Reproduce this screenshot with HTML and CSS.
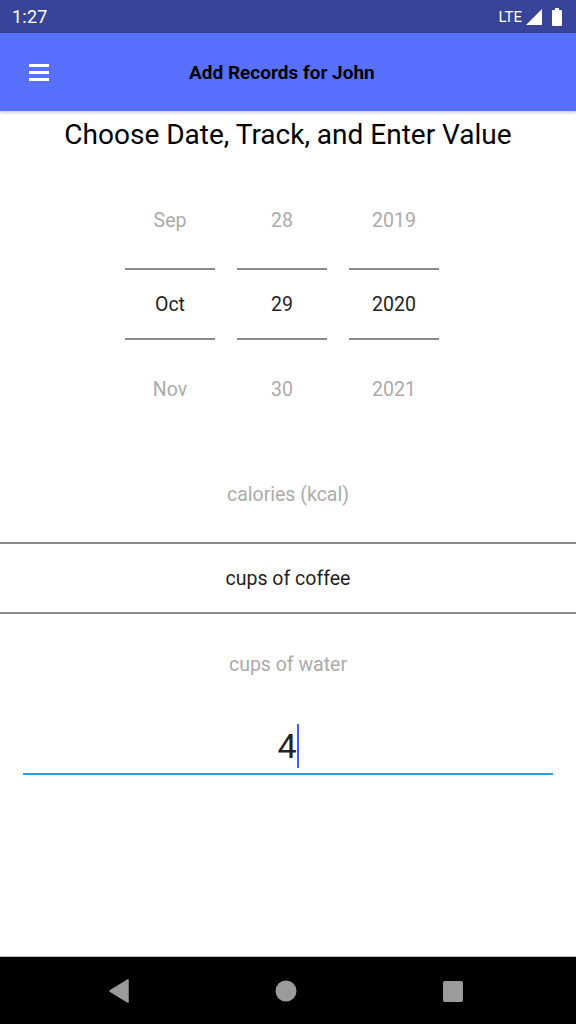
FILE: index.html
```html
<!DOCTYPE html>
<html>
<head>
<meta charset="utf-8">
<link rel="stylesheet" href="styles.css">
</head>
<body>
<div class="screen">
  <div class="statusbar">
    <span class="time">1:27</span>
    <div class="status-icons">
      <span class="lte">LTE</span>
      <svg class="signal" width="16" height="16" viewBox="0 0 16 16"><path d="M16 0 L16 16 L0 16 Z" fill="#fff"/></svg>
      <svg class="battery" width="10" height="18" viewBox="0 0 10 18"><rect x="3" y="0" width="4" height="2" fill="#fff"/><rect x="0" y="2" width="10" height="16" rx="1" fill="#fff"/></svg>
    </div>
  </div>
  <div class="appbar">
    <svg class="menu" width="20" height="17" viewBox="0 0 20 17"><rect x="0" y="0" width="20" height="3" fill="#fff"/><rect x="0" y="7" width="20" height="3" fill="#fff"/><rect x="0" y="14" width="20" height="3" fill="#fff"/></svg>
    <div class="appbar-title">Add Records for John</div>
  </div>
  <main class="content">
    <h1 class="heading">Choose Date, Track, and Enter Value</h1>
    <div class="date-picker">
      <div class="col">
        <div class="cell faded top">Sep</div>
        <div class="cell sel">Oct</div>
        <div class="cell faded bottom">Nov</div>
      </div>
      <div class="col">
        <div class="cell faded top">28</div>
        <div class="cell sel">29</div>
        <div class="cell faded bottom">30</div>
      </div>
      <div class="col">
        <div class="cell faded top">2019</div>
        <div class="cell sel">2020</div>
        <div class="cell faded bottom">2021</div>
      </div>
    </div>
    <div class="track-picker">
      <div class="cell faded top">calories (kcal)</div>
      <div class="cell sel">cups of coffee</div>
      <div class="cell faded bottom">cups of water</div>
    </div>
    <div class="value-input">
      <span class="value">4</span><span class="cursor"></span>
    </div>
  </main>
  <div class="navbar">
    <svg width="22" height="24" viewBox="0 0 22 24"><path d="M20 1 L20 23 L2 12 Z" fill="#9b9b9b" stroke="#9b9b9b" stroke-width="1.5" stroke-linejoin="round"/></svg>
    <svg width="22" height="22" viewBox="0 0 22 22"><circle cx="11" cy="11" r="10.5" fill="#9b9b9b"/></svg>
    <svg width="22" height="22" viewBox="0 0 22 22"><rect x="1" y="1" width="20" height="21" rx="2" fill="#9b9b9b"/></svg>
  </div>
</div>
</body>
</html>
```
FILE: styles.css
```css
html, body {
  margin: 0;
  padding: 0;
}
body {
  font-family: Roboto, "Liberation Sans", sans-serif;
  background: #fff;
}
.screen {
  width: 576px;
  height: 1024px;
  display: flex;
  flex-direction: column;
  overflow: hidden;
}
.statusbar {
  height: 33px;
  background: #38449a;
  color: #fff;
  display: flex;
  align-items: center;
  justify-content: space-between;
  padding: 0 14px 0 12px;
  flex-shrink: 0;
}
.time {
  font-size: 18px;
  letter-spacing: 0.2px;
}
.status-icons {
  display: flex;
  align-items: center;
  gap: 4px;
}
.lte {
  font-size: 15px;
}
.battery {
  margin-left: 6px;
}
.appbar {
  height: 78px;
  background: #5870ff;
  display: flex;
  align-items: center;
  padding-left: 29px;
  box-shadow: 0 2px 3px rgba(0,0,0,0.18);
  position: relative;
  z-index: 1;
  flex-shrink: 0;
}
.menu {
  flex-shrink: 0;
}
.appbar-title {
  font-size: 19px;
  font-weight: bold;
  color: #000;
  margin-left: 140px;
}
.content {
  flex: 1;
  display: flex;
  flex-direction: column;
}
.heading {
  margin: 7px 0 0;
  font-size: 28px;
  font-weight: normal;
  line-height: 34px;
  text-align: center;
  color: #000;
}
.date-picker {
  display: flex;
  justify-content: center;
  gap: 22px;
  margin-top: 20px;
  padding-right: 12px;
}
.col {
  width: 90px;
  display: flex;
  flex-direction: column;
}
.cell {
  display: flex;
  align-items: center;
  justify-content: center;
  font-size: 19.5px;
}
.faded {
  color: #ababab;
}
.sel {
  color: #1f1f1f;
  height: 68px;
  border-top: 2px solid #8c8c8c;
  border-bottom: 2px solid #8c8c8c;
}
.top {
  height: 96px;
}
.bottom {
  height: 98px;
}
.track-picker {
  display: flex;
  flex-direction: column;
  margin-top: 8px;
}
.track-picker .sel {
  height: 68px;
  border-width: 2.5px;
  border-color: #8a8a8a;
}
.track-picker .bottom {
  height: 100px;
}
.value-input {
  margin: 0 23px;
  height: 59px;
  border-bottom: 2px solid #2a9ee6;
  display: flex;
  justify-content: center;
  align-items: center;
}
.value {
  font-size: 34px;
  color: #222;
  line-height: 40px;
  padding-top: 4px;
}
.cursor {
  width: 2px;
  height: 44px;
  background: #3d5afe;
  margin-top: 4px;
}
.navbar {
  height: 67px;
  background: #000;
  border-top: 1px solid #bdbdbd;
  display: flex;
  align-items: center;
  justify-content: space-between;
  padding: 0 112px 0 108px;
  flex-shrink: 0;
}
```
